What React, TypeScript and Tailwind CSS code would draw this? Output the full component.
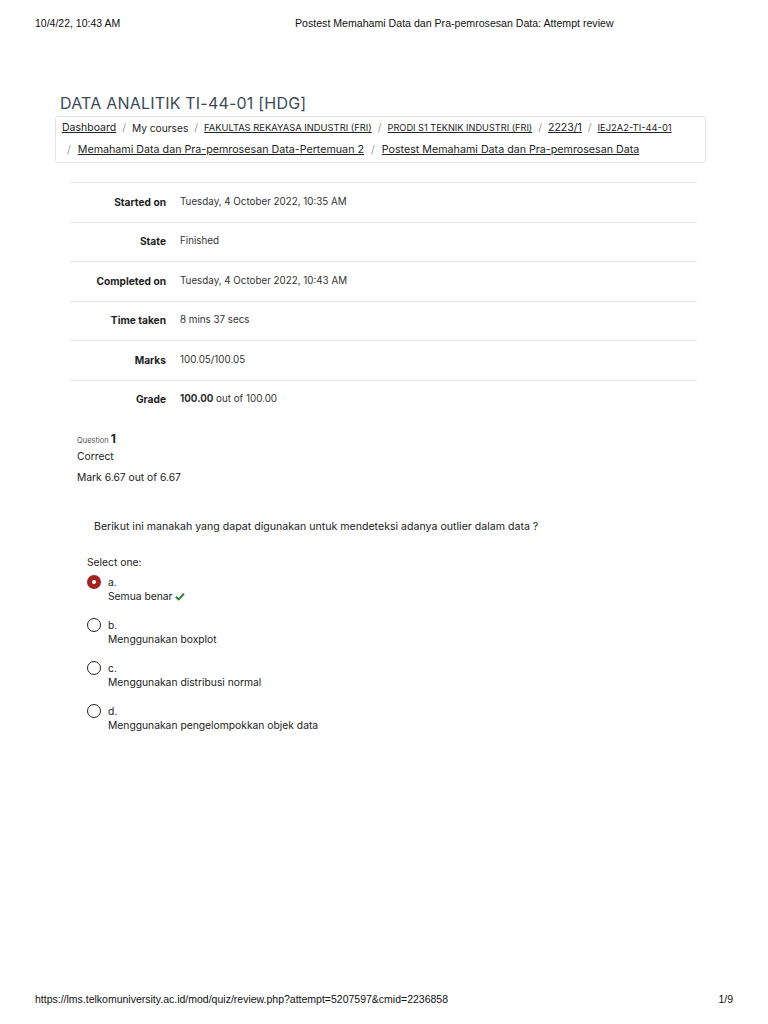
import React from "react";

const font = { fontFamily: "Inter, 'Open Sans', sans-serif" };

function Row({ label, children }: { label: string; children: React.ReactNode }) {
  return (
    <div className="flex items-center h-[39.5px] border-t border-[#e8e8e8]">
      <div className="w-[96px] text-right font-bold text-[10.2px] text-[#1d1d1d]">{label}</div>
      <div className="pl-[14px] text-[9.8px] text-[#333]">{children}</div>
    </div>
  );
}

function Radio({ checked }: { checked?: boolean }) {
  if (checked)
    return (
      <div className="w-[14px] h-[14px] rounded-full bg-[#a3241f] flex items-center justify-center">
        <div className="w-[4px] h-[4px] rounded-full bg-white" />
      </div>
    );
  return <div className="w-[14px] h-[14px] rounded-full border-[1.7px] border-[#222]" />;
}

function Option({ letter, text, checked, correct }: { letter: string; text: string; checked?: boolean; correct?: boolean }) {
  return (
    <div className="flex items-start h-[43px]">
      <div className="w-[21px]">
        <Radio checked={checked} />
      </div>
      <div className="text-[10.3px] text-[#222] leading-[14px]">
        <div>{letter}</div>
        <div className="flex items-center gap-[3px]">
          {text}
          {correct && (
            <svg width="10" height="9" viewBox="0 0 10 9">
              <path d="M1 4.8 L3.7 7.4 L9 1.6" stroke="#2e7d32" strokeWidth="2" fill="none" />
            </svg>
          )}
        </div>
      </div>
    </div>
  );
}

function Sep() {
  return <span className="text-[#999] text-[10.5px]">/</span>;
}

export default function App() {
  return (
    <div className="w-[768px] h-[1024px] bg-white relative overflow-hidden" style={font}>
      <div className="flex items-center pt-[17px] h-[30px] text-[11px] text-[#111]" style={{ fontFamily: "'Liberation Sans', Arial, sans-serif" }}>
        <div className="pl-[35px] w-[295px] text-[10.5px]">10/4/22, 10:43 AM</div>
        <div className="text-[10.6px]">Postest Memahami Data dan Pra-pemrosesan Data: Attempt review</div>
      </div>

      <div className="pl-[55px] pr-[62px] pt-[61px]">
        <div className="pl-[5px] text-[16px] leading-[24px] text-[#3b4a58] tracking-[0.2px]">DATA ANALITIK TI-44-01 [HDG]</div>
        <div className="mt-[1px] h-[47px] border border-[#e4e4e4] rounded-[3px] px-[6px] text-[10.5px] text-[#222] leading-[22px] whitespace-nowrap">
          <div className="flex items-center gap-[6px]">
            <span className="underline">Dashboard</span>
            <Sep />
            <span className="text-[10.2px]">My courses</span>
            <Sep />
            <span className="underline text-[9.4px]">FAKULTAS REKAYASA INDUSTRI (FRI)</span>
            <Sep />
            <span className="underline text-[9.2px]">PRODI S1 TEKNIK INDUSTRI (FRI)</span>
            <Sep />
            <span className="underline">2223/1</span>
            <Sep />
            <span className="underline text-[9.4px]">IEJ2A2-TI-44-01</span>
          </div>
          <div className="flex items-center gap-[7px] pl-[5px] text-[10.7px]">
            <Sep />
            <span className="underline">Memahami Data dan Pra-pemrosesan Data-Pertemuan 2</span>
            <Sep />
            <span className="underline">Postest Memahami Data dan Pra-pemrosesan Data</span>
          </div>
        </div>
      </div>

      <div className="ml-[70px] w-[627px] mt-[19px]">
        <Row label="Started on">Tuesday, 4 October 2022, 10:35 AM</Row>
        <Row label="State">Finished</Row>
        <Row label="Completed on">Tuesday, 4 October 2022, 10:43 AM</Row>
        <Row label="Time taken">8 mins 37 secs</Row>
        <Row label="Marks">100.05/100.05</Row>
        <Row label="Grade">
          <span className="font-bold">100.00</span> out of 100.00
        </Row>
      </div>

      <div className="pl-[77px] mt-[11px] text-[#222]">
        <div className="flex items-baseline gap-[2px]">
          <span className="text-[7.5px] text-[#555]">Question</span>
          <span className="text-[12px] font-bold">1</span>
        </div>
        <div className="text-[10.3px] mt-[1px]">Correct</div>
        <div className="text-[10.3px] mt-[6px]">Mark 6.67 out of 6.67</div>
      </div>

      <div className="pl-[94px] mt-[33px] text-[10.6px] text-[#222]">
        Berikut ini manakah yang dapat digunakan untuk mendeteksi adanya outlier dalam data ?
      </div>

      <div className="pl-[87px] mt-[20px] text-[10.3px] text-[#222]">
        <div className="mb-[5px]">Select one:</div>
        <Option letter="a." text="Semua benar" checked correct />
        <Option letter="b." text="Menggunakan boxplot" />
        <Option letter="c." text="Menggunakan distribusi normal" />
        <Option letter="d." text="Menggunakan pengelompokkan objek data" />
      </div>

      <div
        className="absolute left-0 right-0 top-[992px] flex justify-between px-[35px] text-[10.5px] text-[#111]"
        style={{ fontFamily: "'Liberation Sans', Arial, sans-serif" }}
      >
        <span>https://lms.telkomuniversity.ac.id/mod/quiz/review.php?attempt=5207597&amp;cmid=2236858</span>
        <span>1/9</span>
      </div>
    </div>
  );
}
